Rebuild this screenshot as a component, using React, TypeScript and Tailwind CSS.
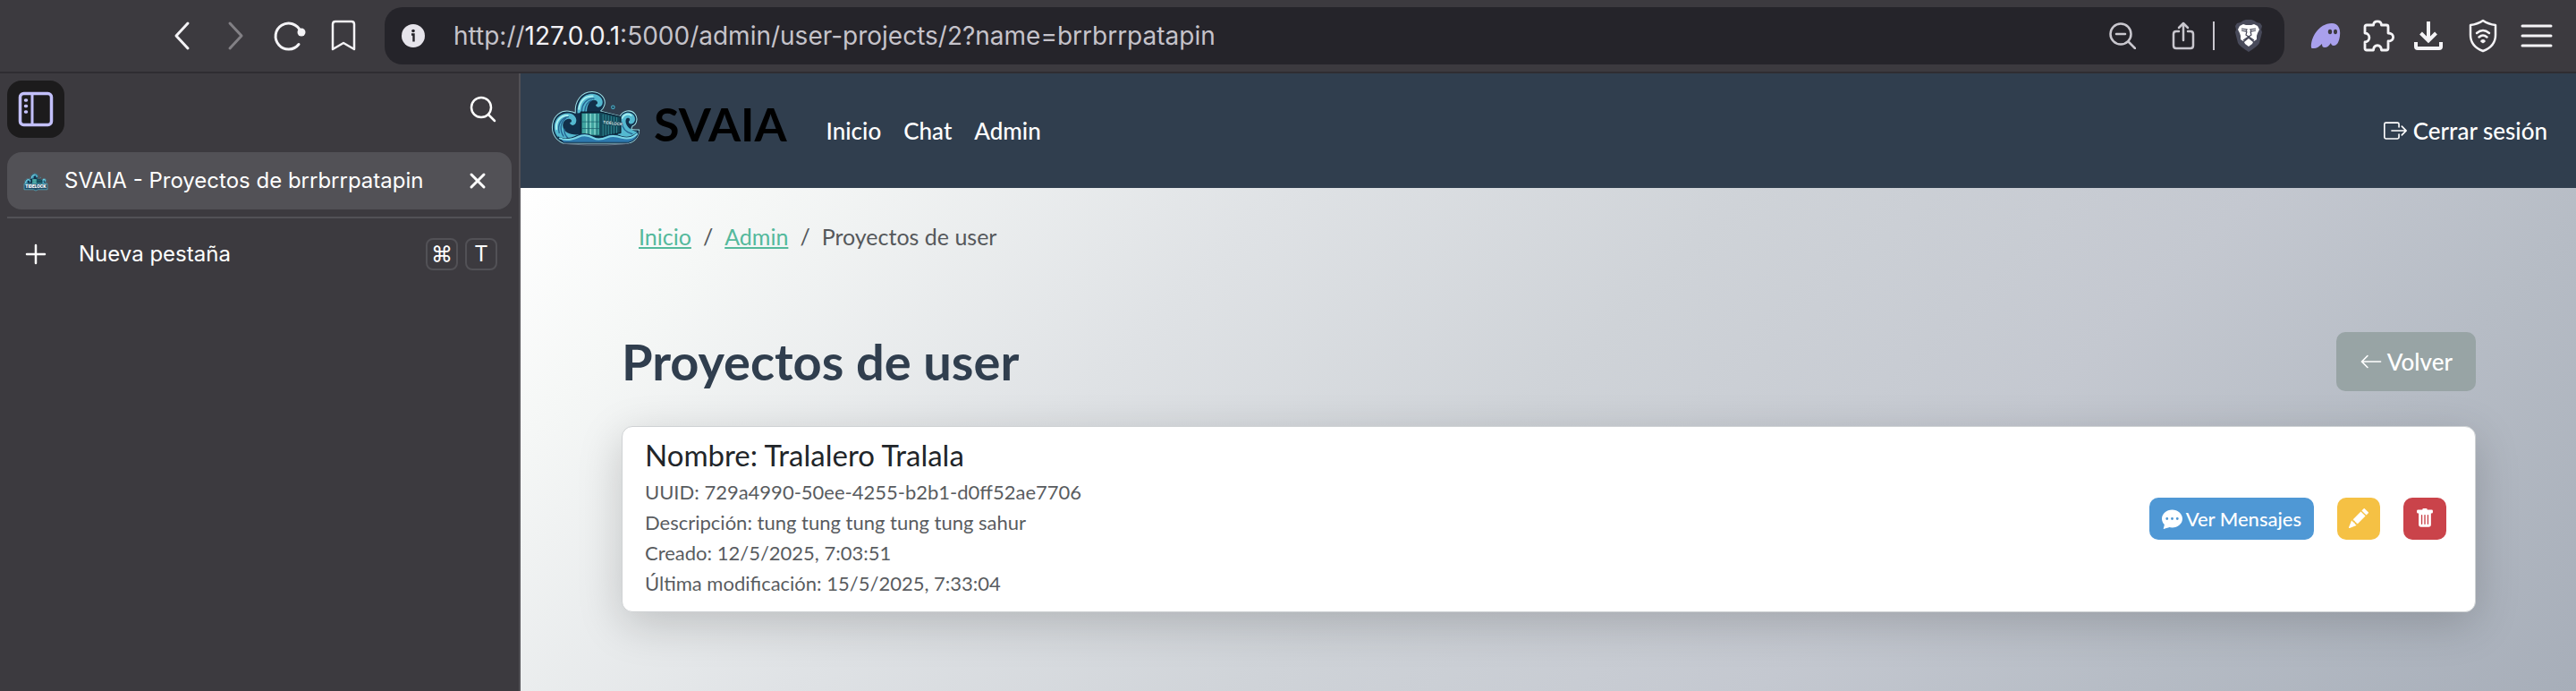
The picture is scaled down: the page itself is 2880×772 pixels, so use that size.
import React from "react";
import {
  BsArrowLeft,
  BsBoxArrowRight,
  BsChatDotsFill,
  BsPencilFill,
  BsTrashFill,
} from "react-icons/bs";

const line = {
  fill: "none",
  stroke: "currentColor",
  strokeLinecap: "round" as const,
  strokeLinejoin: "round" as const,
};

function WaveArt() {
  return (
    <g strokeLinecap="round" strokeLinejoin="round">
      <path
        d="M52 186C24 174 14 148 18 124C23 94 46 78 72 81C82 82 88 84 93 87C90 48 114 16 149 17C177 18 195 40 189 61C187 69 182 76 176 81L240 97C250 79 275 74 288 89C300 103 296 124 281 130C279 134 277 138 277 141C286 143 296 142 303 142C303 164 288 181 268 186Z"
        fill="#12304a"
        stroke="#9fe0e6"
        strokeWidth="3"
      />
      <path
        d="M58 183C32 172 21 148 24 126C29 100 50 85 73 88C93 91 101 109 94 121C89 130 76 129 75 119C82 118 83 110 76 107C64 102 51 114 52 130C54 150 75 160 104 158L112 180Z"
        fill="#54b9d0"
      />
      <path d="M31 140C28 112 46 94 68 95" fill="none" stroke="#a9eff0" strokeWidth="6" />
      <path d="M40 152C33 124 48 102 70 100M54 163C42 145 42 118 62 104M70 170C60 162 56 150 57 140" fill="none" stroke="#24618f" strokeWidth="4" />
      <path
        d="M100 88C98 50 119 24 149 24C173 25 187 43 182 58C177 71 161 70 160 60C167 59 169 51 161 46C145 38 130 58 131 84Z"
        fill="#54b9d0"
      />
      <path d="M105 74C108 46 126 31 150 32" fill="none" stroke="#a9eff0" strokeWidth="6" />
      <path d="M114 82C115 56 132 38 154 40M124 82C125 64 134 50 146 46" fill="none" stroke="#24618f" strokeWidth="4" />
      <path
        d="M240 106C248 84 272 80 284 93C294 106 289 121 277 123C269 123 266 116 271 112C275 108 270 102 263 104C254 108 256 140 297 149C292 169 277 178 260 181L232 160Z"
        fill="#54b9d0"
      />
      <path d="M247 104C253 91 267 88 277 95" fill="none" stroke="#a9eff0" strokeWidth="5" />
      <path d="M246 118C247 136 258 150 280 156" fill="none" stroke="#24618f" strokeWidth="4" />
      <path d="M111 84H176L242 100V152L176 166L111 160Z" fill="#14495a" stroke="#0b2234" strokeWidth="4" />
      <path d="M115 89H172V159H115Z" fill="#3fa39f" />
      <path d="M130 90V158M143 90V158M157 90V158" stroke="#9fe6dc" strokeWidth="3" />
      <path d="M116 116H171M116 138H171M136 90V158M164 90V158" stroke="#185666" strokeWidth="2" />
      <path d="M184 92V161M193 94V160M202 96V158M211 98V156M220 100V154M229 102V152" stroke="#2f8790" strokeWidth="3" />
      <path d="M182 117L236 124" stroke="#14495a" strokeWidth="14" strokeLinecap="butt" />
      <path
        d="M36 166C60 178 82 170 102 160C122 152 138 156 152 164C168 174 182 168 198 161C214 155 230 158 246 164C266 170 286 164 301 146C300 166 286 180 268 184H54Z"
        fill="#2d79ae"
        stroke="#12304a"
        strokeWidth="3"
      />
      <path
        d="M42 170C64 180 84 174 104 165C122 157 138 161 152 169C168 178 184 173 200 166C216 160 230 163 246 168C264 173 282 169 295 156"
        fill="none"
        stroke="#79d6e5"
        strokeWidth="6"
      />
      <path d="M56 187C110 194 220 194 266 187" fill="none" stroke="#66778a" strokeWidth="3" />
      <circle cx="217" cy="68" r="5" fill="#173a4f" stroke="#4fb6cf" strokeWidth="3" />
    </g>
  );
}

function WaveLogo() {
  return (
    <svg viewBox="10 10 300 188" className="h-16 w-[102px]" aria-hidden="true">
      <WaveArt />
      <text x="183" y="122" transform="rotate(6 183 122)" fontFamily="Inter, sans-serif" fontWeight="600" fontSize="13" fill="#e4f6f5">
        TIDELOCK
      </text>
    </svg>
  );
}

function Favicon() {
  return (
    <svg viewBox="0 -20 320 260" className="h-6 w-7" aria-hidden="true">
      <WaveArt />
      <path d="M12 146H308V222H190L160 236L130 222H12Z" fill="#1d4a66" stroke="#5fb4c4" strokeWidth="8" />
      <text x="160" y="205" textAnchor="middle" fontFamily="Inter, sans-serif" fontWeight="900" fontSize="52" fill="#fff">
        TIDELOCK
      </text>
    </svg>
  );
}

function IconButton({ label, className = "", children }: { label: string; className?: string; children: React.ReactNode }) {
  return (
    <button type="button" aria-label={label} className={`flex items-center justify-center ${className}`}>
      {children}
    </button>
  );
}

function Toolbar() {
  return (
    <header className="flex h-[82px] items-center border-b-2 border-[#2f2d32] bg-[#3c3a3f] pr-[26px] pl-[188px] text-[#f4f3f6]">
      <div className="flex items-center">
        <IconButton label="Atrás" className="w-8">
          <svg viewBox="0 0 32 36" className="h-9 w-8" {...line} strokeWidth="3">
            <path d="M22 4L9 18L22 32" />
          </svg>
        </IconButton>
        <IconButton label="Adelante" className="ml-7 w-8 text-[#828085]">
          <svg viewBox="0 0 32 36" className="h-9 w-8" {...line} strokeWidth="3">
            <path d="M9 4L22 18L9 32" />
          </svg>
        </IconButton>
        <IconButton label="Recargar" className="ml-6 w-10">
          <svg viewBox="0 0 40 36" className="h-9 w-10" {...line} strokeWidth="3">
            <path d="M32 13A14.500 14.500 0 1 0 30 27.500" />
            <circle cx="33" cy="14" r="4.500" fill="currentColor" stroke="none" />
          </svg>
        </IconButton>
        <IconButton label="Marcador" className="ml-6 w-8">
          <svg viewBox="0 0 32 36" className="h-9 w-8" {...line} strokeWidth="2.500">
            <path d="M7 2H25Q28 2 28 5V33L16 26L4 33V5Q4 2 7 2Z" />
          </svg>
        </IconButton>
      </div>

      <div className="ml-[30px] flex h-16 flex-1 items-center rounded-[20px] bg-[#25242a] pr-6 pl-[19px]">
        <svg viewBox="0 0 26 26" className="size-[26px]" aria-hidden="true">
          <circle cx="13" cy="13" r="13" fill="#e6e4eb" />
          <circle cx="13" cy="7.500" r="1.800" fill="#25242a" />
          <path d="M11 11.500H13.500V19.500" fill="none" stroke="#25242a" strokeWidth="2.400" />
        </svg>
        <div className="ml-8 flex-1 font-['Inter',sans-serif] text-[28px] whitespace-nowrap text-[#c5c3ca]">
          http://<span className="text-[#f2f1f5]">127.0.0.1</span>:5000/admin/user-projects/2?name=brrbrrpatapin
        </div>
        <div className="flex items-center text-[#c9c7ce]">
          <IconButton label="Alejar">
            <svg viewBox="0 0 30 30" className="size-[30px]" {...line} strokeWidth="2.500">
              <circle cx="13" cy="13" r="11.500" />
              <path d="M8 13H18M21.500 21.500L29 29" />
            </svg>
          </IconButton>
          <IconButton label="Compartir" className="ml-[38px]">
            <svg viewBox="0 0 30 32" className="h-8 w-[30px]" {...line} strokeWidth="2.500">
              <path d="M10 11H7Q4 11 4 14V27Q4 30 7 30H23Q26 30 26 27V14Q26 11 23 11H20M15 21V2M10 7L15 2L20 7" />
            </svg>
          </IconButton>
          <span className="ml-[18px] h-8 w-0.5 bg-[#c9c7ce]" />
          <IconButton label="Brave Shields" className="ml-[22px]">
            <svg viewBox="0 0 32 38" className="h-[38px] w-8">
              <path
                d="M10 2L13 1H19L22 2L25 4L29 5L31 8L30 12L31 15L28 27Q27 30 16 37Q5 30 4 27L1 15L2 12L1 8L3 5L7 4Z"
                fill="#484a5a"
              />
              <path
                d="M6 8L10 6L13 7H19L22 6L26 8L28 12L26 16L25 19L25 23L22 25L19 22L16 20L13 22L10 25L7 23L7 19L6 16L4 12Z"
                fill="#fff"
              />
              <path d="M11 26L16 22L21 26L20 28L16 31L12 28Z" fill="#fff" />
              <path
                d="M8 11L14 12L13 14L8 13M24 11L18 12L19 14L24 13M14 14L13 18L16 20L19 18L18 14M10 24L16 20L22 24"
                fill="none"
                stroke="#484a5a"
                strokeWidth="1.200"
              />
            </svg>
          </IconButton>
        </div>
      </div>

      <div className="ml-[29px] flex items-center">
        <IconButton label="Fantasma">
          <svg viewBox="0 0 34 30" className="h-[30px] w-[34px]">
            <path
              d="M1 28C0 18 9 1 24 1C31 1 34 7 33 15C32 22 30 26 26 26C24 26 23 24 23 23C21 26 19 28 16 28C14 28 13 27 13 24C10 27 7 29 4 29C2 29 1 29 1 28Z"
              fill="#a9a0ec"
            />
            <ellipse cx="22" cy="10.500" rx="2.200" ry="2.800" fill="#3c3a3f" />
            <ellipse cx="28" cy="10.500" rx="2" ry="2.800" fill="#3c3a3f" />
          </svg>
        </IconButton>
        <IconButton label="Extensiones" className="ml-[25px]">
          <svg viewBox="0 0 36 36" className="size-9" {...line} strokeWidth="2.800">
            <path d="M4 6H11.500C12 0.500 20 0.500 20.500 6H26Q28 6 28 8V15C35.500 15 35.500 24 28 24V32Q28 34 26 34H20.500C20 27 12 27 11.500 34H4Q2 34 2 32V25C8.500 25 8.500 15 2 15V8Q2 6 4 6Z" />
          </svg>
        </IconButton>
        <IconButton label="Descargas" className="ml-5">
          <svg viewBox="0 0 34 34" className="size-[34px]" fill="none" stroke="currentColor" strokeWidth="4">
            <path d="M17 1V22M8.500 14L17 22.500L25.500 14M3 24V29Q3 31 5 31H29Q31 31 31 29V24" />
          </svg>
        </IconButton>
        <IconButton label="VPN" className="ml-7">
          <svg viewBox="0 0 32 38" className="h-[38px] w-8" {...line} strokeWidth="2.500">
            <path d="M16 2Q22 6 30 7V18C30 28 24 33 16 36C8 33 2 28 2 18V7Q10 6 16 2Z" />
            <path d="M9 16Q16 10 23 16M11.500 20.500Q16 16.500 20.500 20.500" />
            <path d="M14.500 25L16 26L17.500 25Q16 23.500 14.500 25Z" />
          </svg>
        </IconButton>
        <IconButton label="Menú" className="ml-[26px]">
          <svg viewBox="0 0 36 30" className="h-[30px] w-9" {...line} strokeWidth="3">
            <path d="M2 4H34M2 15H34M2 26H34" />
          </svg>
        </IconButton>
      </div>
    </header>
  );
}

function Key({ children }: { children: React.ReactNode }) {
  return (
    <kbd className="flex size-9 items-center justify-center rounded-lg border-2 border-[#525156] font-['Inter',sans-serif] text-2xl">
      {children}
    </kbd>
  );
}

function Sidebar() {
  return (
    <aside className="flex w-[582px] shrink-0 flex-col border-r-2 border-[#515055] bg-[#3c3a3f] px-2 pt-2 font-['Inter',sans-serif] text-2xl text-white">
      <div className="flex items-center justify-between pr-[17px]">
        <IconButton label="Panel lateral" className="size-16 rounded-2xl bg-[#1c1b1c] text-[#c3c0fb]">
          <svg viewBox="0 0 40 40" className="size-10" {...line} strokeWidth="3.500">
            <rect x="2.500" y="2.500" width="35" height="35" rx="4" />
            <path d="M16 3V37" strokeWidth="3" />
            <path d="M8.500 10H9.500M8.500 16.500H9.500M8.500 23H9.500" strokeWidth="3.500" />
          </svg>
        </IconButton>
        <IconButton label="Buscar pestañas">
          <svg viewBox="0 0 30 30" className="size-[30px]" {...line} strokeWidth="2.500">
            <circle cx="13" cy="13" r="11" />
            <path d="M21 21L28 28" />
          </svg>
        </IconButton>
      </div>

      <div className="mt-4 flex h-16 items-center rounded-2xl bg-[#525156] pr-[28px] pl-[18px]">
        <Favicon />
        <span className="ml-[18px] flex-1 whitespace-nowrap">SVAIA - Proyectos de brrbrrpatapin</span>
        <IconButton label="Cerrar pestaña">
          <svg viewBox="0 0 20 20" className="size-5" {...line} strokeWidth="3">
            <path d="M3 3L17 17M17 3L3 17" />
          </svg>
        </IconButton>
      </div>

      <hr className="mt-2 border-t-2 border-[#525156]" />

      <div className="mt-[22px] flex items-center pr-4 pl-5">
        <button type="button" className="flex flex-1 items-center gap-9 text-left">
          <svg viewBox="0 0 24 24" className="size-6" {...line} strokeWidth="2.500">
            <path d="M12 2V22M2 12H22" />
          </svg>
          Nueva pestaña
        </button>
        <div className="flex gap-2">
          <Key>⌘</Key>
          <Key>T</Key>
        </div>
      </div>
    </aside>
  );
}

function Navbar() {
  return (
    <nav className="flex h-32 items-center justify-between bg-[#303e4e] pr-8 pl-[33px] text-[26px] font-medium text-white">
      <div className="flex items-center">
        <a href="#inicio" className="flex items-end gap-[14px] pb-7">
          <WaveLogo />
          <span className="text-[52px] leading-none font-bold text-black">SVAIA</span>
        </a>
        <div className="ml-11 flex gap-[25px]">
          <a href="#inicio">Inicio</a>
          <a href="#chat">Chat</a>
          <a href="#admin">Admin</a>
        </div>
      </div>
      <a href="#salir" className="flex items-center gap-[7px]">
        <BsBoxArrowRight className="size-[26px]" />
        Cerrar sesión
      </a>
    </nav>
  );
}

function ProjectCard() {
  return (
    <article className="flex items-center justify-between rounded-xl border border-[#cfd2d4] bg-white pt-3 pr-8 pb-[14px] pl-[25px] shadow-[0_13px_50px_rgba(0,0,0,0.18)]">
      <div>
        <h2 className="text-[33px] leading-[38px] text-[#212529]">Nombre: Tralalero Tralala</h2>
        <div className="mt-[6px] text-[22px] leading-[34px] text-[#595c5f]">
          <p>UUID: 729a4990-50ee-4255-b2b1-d0ff52ae7706</p>
          <p>Descripción: tung tung tung tung tung sahur</p>
          <p>Creado: 12/5/2025, 7:03:51</p>
          <p>Última modificación: 15/5/2025, 7:33:04</p>
        </div>
      </div>
      <div className="flex items-center gap-[26px] text-[22px] text-white">
        <button type="button" className="flex h-[47px] items-center gap-1 rounded-[10px] bg-[#4f98d5] px-[14px] font-medium">
          <BsChatDotsFill className="size-[23px]" />
          Ver Mensajes
        </button>
        <IconButton label="Editar" className="h-[47px] w-12 rounded-[10px] bg-[#f5c144]">
          <BsPencilFill className="size-[22px]" />
        </IconButton>
        <IconButton label="Eliminar" className="h-[47px] w-12 rounded-[10px] bg-[#ca434a]">
          <BsTrashFill className="size-[22px]" />
        </IconButton>
      </div>
    </article>
  );
}

export default function App() {
  return (
    <div className="flex min-h-screen flex-col">
      <Toolbar />
      <div className="flex flex-1">
        <Sidebar />
        <div className="flex flex-1 flex-col font-['Lato',sans-serif]">
          <Navbar />
          <main className="flex-1 bg-[linear-gradient(135deg,#ffffff_0%,#f5f7f6_10%,#dfe2e5_30%,#cfd3d8_48%,#c4c8d0_68%,#b6bcc5_82%,#a7aeb9_100%)] pr-28 pl-[113px]">
            <nav aria-label="Ruta" className="flex gap-[13px] pt-[35px] pl-[19px] text-[25px] leading-[38px] text-[#55585b]">
              <a href="#inicio" className="text-[#54b99c] underline">Inicio</a>
              <span>/</span>
              <a href="#admin" className="text-[#54b99c] underline">Admin</a>
              <span>/</span>
              <span>Proyectos de user</span>
            </nav>
            <div className="mt-[88px] flex items-center justify-between">
              <h1 className="text-[56px] leading-[66px] font-bold text-[#303e4e]">Proyectos de user</h1>
              <a
                href="#volver"
                className="flex h-[66px] items-center gap-[5px] rounded-[10px] bg-[#98a4a5] px-[26px] text-[26px] font-medium text-white"
              >
                <BsArrowLeft className="size-[26px]" />
                Volver
              </a>
            </div>
            <div className="mt-[39px]">
              <ProjectCard />
            </div>
          </main>
        </div>
      </div>
    </div>
  );
}
